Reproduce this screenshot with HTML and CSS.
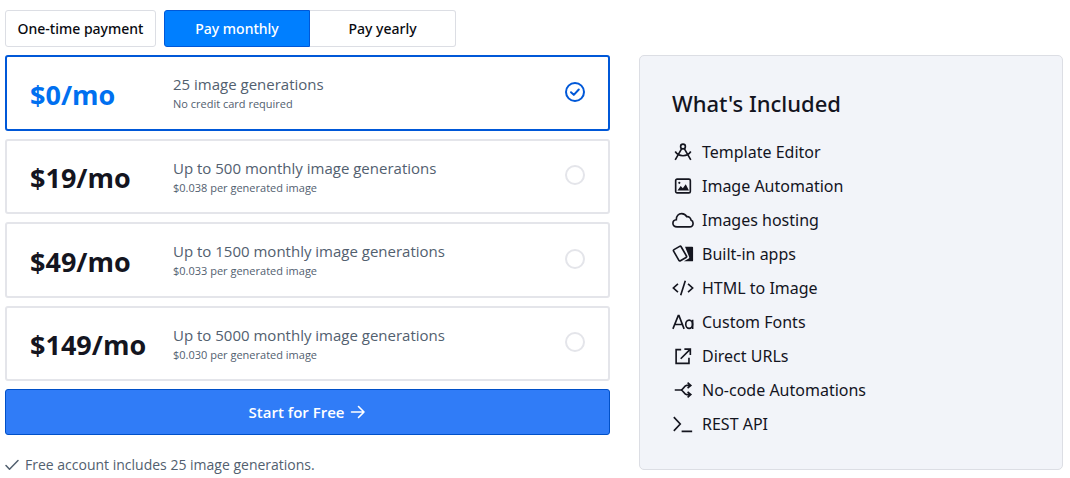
FILE: index.html
```html
<!DOCTYPE html>
<html lang="en">
<head>
<meta charset="utf-8">
<meta name="viewport" content="width=device-width, initial-scale=1">
<title>Pricing</title>
<link rel="stylesheet" href="styles.css">
</head>
<body>
<main class="pricing">
  <div class="billing">
    <button type="button" class="tab tab-single">One-time payment</button>
    <div class="tab-group">
      <button type="button" class="tab tab-active" aria-pressed="true">Pay monthly</button>
      <button type="button" class="tab" aria-pressed="false">Pay yearly</button>
    </div>
  </div>
  <div class="columns">
    <form class="plans">
      <div class="plan-list">
        <label class="plan">
          <span class="price">$0/mo</span>
          <span class="details"><span class="quota">25 image generations</span><span class="note">No credit card required</span></span>
          <span class="choice"><input class="radio" type="radio" name="plan" checked><svg class="tick" viewBox="0 0 20 20" aria-hidden="true"><path d="M6 10.2l2.8 2.700 5-5.400"/></svg></span>
        </label>
        <label class="plan">
          <span class="price">$19/mo</span>
          <span class="details"><span class="quota">Up to 500 monthly image generations</span><span class="note">$0.038 per generated image</span></span>
          <span class="choice"><input class="radio" type="radio" name="plan"></span>
        </label>
        <label class="plan">
          <span class="price">$49/mo</span>
          <span class="details"><span class="quota">Up to 1500 monthly image generations</span><span class="note">$0.033 per generated image</span></span>
          <span class="choice"><input class="radio" type="radio" name="plan"></span>
        </label>
        <label class="plan">
          <span class="price">$149/mo</span>
          <span class="details"><span class="quota">Up to 5000 monthly image generations</span><span class="note">$0.030 per generated image</span></span>
          <span class="choice"><input class="radio" type="radio" name="plan"></span>
        </label>
      </div>
      <button type="button" class="start">Start for Free
        <svg class="arrow" viewBox="0 0 16 16" aria-hidden="true"><path d="M1.500 8h12.500M8.500 2.500L14 8l-5.500 5.500"/></svg>
      </button>
      <p class="footnote"><svg class="check" viewBox="0 0 14 14" aria-hidden="true"><path d="M1 7.500l3.500 3.800L13 2.500"/></svg>Free account includes 25 image generations.</p>
    </form>
    <section class="included">
      <h2 class="title">What's Included</h2>
      <ul class="features">
        <li class="feature"><svg class="icon" viewBox="0 0 24 24" aria-hidden="true"><circle cx="12" cy="6" r="2.600"/><path d="M10.600 8.300L3.500 20.500M13.400 8.300l7.100 12.200M3.500 11.500c2 3.200 5 4.600 8.500 4.600s6.500-1.400 8.500-4.600"/></svg>Template Editor</li>
        <li class="feature"><svg class="icon" viewBox="0 0 24 24" aria-hidden="true"><rect x="4" y="4.500" width="16" height="15" rx="1.500"/><path class="solid" d="M6 17l3.500-5 2.300 2.500L15 10l3.500 7z"/><circle class="solid" cx="8" cy="8.500" r="1.200"/></svg>Image Automation</li>
        <li class="feature"><svg class="icon" viewBox="0 0 24 24" aria-hidden="true"><path d="M5.500 19.500C2.500 19.500 1 17.700 1 15.600c0-2.200 1.600-3.700 3.700-3.900C4.500 7.600 7.200 5 10.500 5c2.500 0 4.500 1.300 5.500 3.400 2.300-.4 4.500 1 4.700 3.600 1.500.7 2.300 2 2.300 3.500 0 2.300-1.700 4-4 4z"/></svg>Images hosting</li>
        <li class="feature"><svg class="icon" viewBox="0 0 24 24" aria-hidden="true"><rect x="4" y="4.500" width="9.500" height="14" rx="1.200" transform="rotate(-30 8.750 11.500)"/><path class="solid" d="M14.200 4H22a1 1 0 0 1 1 1v14a1 1 0 0 1-1 1h-9l4.800-2.700a2 2 0 0 0 .7-2.600z"/></svg>Built-in apps</li>
        <li class="feature"><svg class="icon" viewBox="0 0 24 24" aria-hidden="true"><path d="M6.500 7.500L1.500 12l5 4.500M17.500 7.500l5 4.500-5 4.500M14.500 4l-5 16"/></svg>HTML to Image</li>
        <li class="feature"><svg class="icon" viewBox="0 0 24 24" aria-hidden="true"><path d="M1 19.500L6.800 5h.8l5.600 14.500M3 14.700h8.300M22.500 9.500v10"/><ellipse cx="18.700" cy="14.500" rx="3.700" ry="4.500"/></svg>Custom Fonts</li>
        <li class="feature"><svg class="icon" viewBox="0 0 24 24" aria-hidden="true"><path d="M10 5H4.500v15h14v-6M13.500 4.500H20V11M20 4.500L9.500 15"/></svg>Direct URLs</li>
        <li class="feature"><svg class="icon" viewBox="0 0 24 24" aria-hidden="true"><path d="M3 12h6.500M20 7h-4c-3 0-3.500 5-6.500 5 3 0 3.500 5 6.500 5h4M17 4l3.500 3-3.500 3M17 14l3.500 3-3.500 3"/></svg>No-code Automations</li>
        <li class="feature"><svg class="icon" viewBox="0 0 24 24" aria-hidden="true"><path d="M2 4.500l7 7.500-7 7.500M10.500 20H22"/></svg>REST API</li>
      </ul>
    </section>
  </div>
</main>
</body>
</html>
```
FILE: styles.css
```css
* { box-sizing: border-box; }

body {
  margin: 0;
  background: #fff;
  color: #14151f;
  font: 15px/20px "Open Sans", "Noto Sans", sans-serif;
}

button { font: inherit; cursor: pointer; }

.pricing { padding: 10px 7px 0 5px; }

.billing { display: flex; gap: 8px; margin-bottom: 8px; }

.tab {
  min-width: 146px;
  height: 37px;
  padding: 0 8px;
  border: 1px solid #dcdee4;
  border-radius: 3px;
  background: #fff;
  color: #090a10;
  font-family: "Noto Sans", "Open Sans", sans-serif;
  font-size: 14px;
  font-weight: 500;
}

.tab-single { min-width: 151px; }

.tab-group { display: flex; }

.tab-group .tab { border-left: 0; border-radius: 0 3px 3px 0; }

.tab-group .tab-active {
  border: 1px solid #0058d8;
  border-radius: 3px 0 0 3px;
  background: #007fff;
  color: #fff;
}

.columns {
  display: grid;
  grid-template-columns: 605fr 424fr;
  gap: 29px;
  align-items: start;
}

.plan-list {
  display: grid;
  grid-auto-rows: 1fr;
  gap: 8px;
  min-height: 326px;
}

.plan {
  display: flex;
  align-items: center;
  padding: 0 23px;
  border: 2px solid #e4e5ea;
  border-radius: 3px;
  cursor: pointer;
}

.plan:has(:checked) { border-color: #0058d8; }

.price {
  flex: 0 0 143px;
  padding-top: 4px;
  font-size: 27px;
  font-weight: 700;
  line-height: 32px;
}

.plan:has(:checked) .price { color: #0070f0; }

.details {
  flex: 1;
  display: flex;
  flex-direction: column;
  color: #52606f;
}

.quota { line-height: 22px; }

.note { font-size: 11px; line-height: 17px; }

.choice { position: relative; width: 20px; height: 20px; margin-bottom: 2px; }

.radio {
  display: block;
  width: 20px;
  height: 20px;
  margin: 0;
  border: 2px solid #e4e5ea;
  border-radius: 50%;
  appearance: none;
}

.radio:checked { border-color: #0058d8; }

.tick { position: absolute; inset: 0; stroke: #0058d8; }

svg {
  fill: none;
  stroke: currentColor;
  stroke-width: 2;
  stroke-linecap: round;
  stroke-linejoin: round;
}

.start {
  display: flex;
  align-items: center;
  justify-content: center;
  gap: 6px;
  width: 100%;
  height: 46px;
  margin-top: 8px;
  border: 1px solid #0050c8;
  border-radius: 3px;
  background: #307cf7;
  color: #fff;
  font-weight: 600;
}

.arrow { width: 16px; height: 16px; stroke-width: 1.6; }

.footnote {
  display: flex;
  align-items: center;
  gap: 6px;
  margin: 20px 0 0;
  color: #52606f;
  font-size: 14px;
}

.check { width: 14px; height: 14px; stroke-width: 1.5; }

.included {
  padding: 32px 32px 28px;
  border: 1px solid #dcdee4;
  border-radius: 5px;
  background: #f2f4f9;
  font-family: "Noto Sans", "Open Sans", sans-serif;
}

.title {
  margin: 0 0 16px;
  font-size: 22px;
  font-weight: 500;
  line-height: 31px;
}

.features { margin: 0; padding: 0; list-style: none; }

.feature {
  display: flex;
  align-items: center;
  gap: 8px;
  font-size: 16px;
  line-height: 34px;
}

.icon { width: 22px; height: 22px; stroke-width: 1.8; stroke-linecap: butt; stroke-linejoin: miter; }

.solid { fill: currentColor; stroke: none; }
```
